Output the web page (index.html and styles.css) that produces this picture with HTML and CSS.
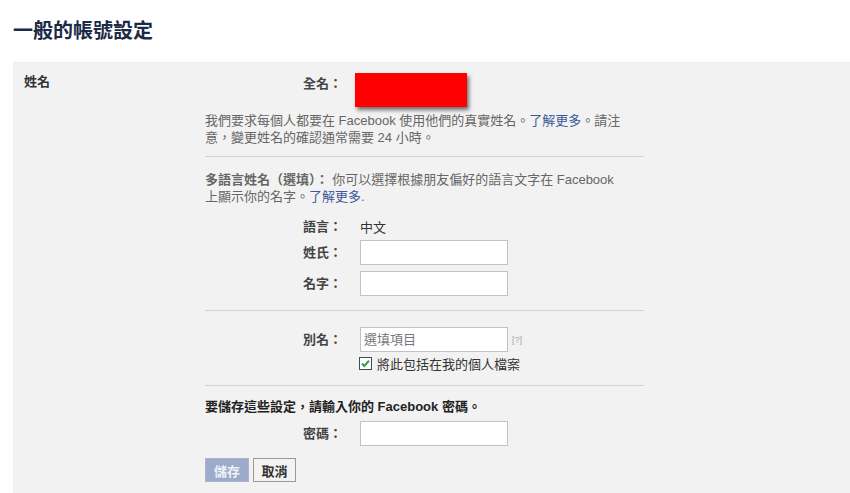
FILE: index.html
```html
<!DOCTYPE html>
<html lang="zh-Hant">
<head>
  <meta charset="UTF-8">
  <title>一般的帳號設定</title>
  <link rel="stylesheet" href="styles.css">
</head>
<body>

<h1 class="page-title">一般的帳號設定</h1>

<div class="panel">
  <div class="panel-label">姓名</div>

  <form class="panel-body">
    <div class="section">
      <div class="row row-top">
        <span class="label">全名：</span>
        <span class="redacted"></span>
      </div>
      <p class="note">我們要求每個人都要在 Facebook 使用他們的真實姓名。<a href="#">了解更多</a>。請注<br>意，變更姓名的確認通常需要 24 小時。</p>
    </div>

    <div class="section">
      <p class="note"><b>多語言姓名（選填）：</b>&nbsp;你可以選擇根據朋友偏好的語言文字在 Facebook<br>上顯示你的名字。<a href="#">了解更多</a>.</p>
      <div class="row row-lang">
        <span class="label">語言：</span>
        <span class="value">中文</span>
      </div>
      <div class="row row-first">
        <label class="label" for="lastName">姓氏：</label>
        <input class="field" type="text" id="lastName">
      </div>
      <div class="row row-next">
        <label class="label" for="firstName">名字：</label>
        <input class="field" type="text" id="firstName">
      </div>
    </div>

    <div class="section section-alias">
      <div class="row">
        <label class="label" for="alias">別名：</label>
        <input class="field" type="text" id="alias" placeholder="選填項目">
        <span class="help">[?]</span>
      </div>
      <div class="check-row">
        <svg class="check" width="13" height="13" viewBox="0 0 13 13">
          <rect x="0.5" y="0.5" width="12" height="12" fill="#fff" stroke="#3b4a63"/>
          <path d="M3 6.5 L5.4 9 L10 3.6" fill="none" stroke="#2fa33a" stroke-width="2"/>
        </svg>
        <span>將此包括在我的個人檔案</span>
      </div>
    </div>

    <div class="section section-last">
      <p class="confirm">要儲存這些設定，請輸入你的 Facebook 密碼。</p>
      <div class="row row-next">
        <label class="label" for="pass">密碼：</label>
        <input class="field" type="password" id="pass">
      </div>
      <div class="buttons">
        <button type="button" class="btn btn-save" disabled>儲存</button>
        <button type="button" class="btn btn-cancel">取消</button>
      </div>
    </div>
  </form>
</div>

</body>
</html>
```

FILE: styles.css
```css
body {
  margin: 0;
  background: #fff;
  font-family: "Liberation Sans", "Noto Sans CJK TC", sans-serif;
  font-size: 13px;
  color: #333;
}

.page-title {
  margin: 0;
  padding: 20px 13px 0;
  height: 62px;
  box-sizing: border-box;
  font-size: 20px;
  line-height: 22px;
  font-weight: bold;
  color: #1c2a47;
}

.panel {
  margin-left: 13px;
  height: 431px;
  box-sizing: border-box;
  background: #f2f2f2;
  border-top: 1px solid #ececec;
  display: grid;
  grid-template-columns: 192px 439px;
}

.panel-label {
  padding: 10px 0 0 11px;
  font-weight: bold;
  color: #333;
  line-height: 17px;
}

.section {
  padding: 10px 0 10px;
  border-bottom: 1px solid #d3d3d3;
}

.section + .section {
  padding-top: 14px;
  padding-bottom: 14px;
}

.section-alias.section {
  padding-top: 16px;
  padding-bottom: 14px;
}

.section-last.section {
  padding-top: 12px;
  border-bottom: none;
}

.row {
  display: flex;
  align-items: center;
}

.row-top {
  align-items: flex-start;
}

.row-lang {
  margin-top: 13px;
  height: 17px;
}

.row-first {
  margin-top: 5px;
}

.row-next {
  margin-top: 6px;
}

.label {
  width: 137px;
  text-align: right;
  font-weight: bold;
  color: #444;
  margin-right: 18px;
  line-height: 17px;
}

.row-top .label {
  margin-top: 2px;
}

.redacted {
  width: 112px;
  height: 34px;
  margin-left: -5px;
  background: #f00;
  box-shadow: 2px 3px 4px rgba(0, 0, 0, 0.55);
}

.note {
  margin: 5px 0 0;
  width: 430px;
  line-height: 17px;
  color: #666;
}

.section + .section .note {
  margin-top: 0;
}

.note b {
  color: #666;
}

.note a {
  color: #3b5998;
  text-decoration: none;
}

.value {
  color: #333;
}

.field {
  width: 148px;
  height: 25px;
  box-sizing: border-box;
  margin: 0;
  padding: 2px 3px;
  border: 1px solid #bdc2cc;
  background: #fff;
  font-family: inherit;
  font-size: 13px;
}

.field::placeholder {
  color: #777;
}

.help {
  margin-left: 4px;
  font-size: 9px;
  color: #aaa;
}

.check-row {
  display: flex;
  align-items: center;
  margin: 4px 0 0 154px;
  height: 15px;
  color: #333;
}

.check {
  margin-right: 5px;
}

.confirm {
  margin: 0;
  line-height: 17px;
  font-weight: bold;
  color: #222;
}

.buttons {
  display: flex;
  gap: 4px;
  margin-top: 12px;
}

.btn {
  height: 24px;
  padding: 0 6px;
  font-family: inherit;
  font-size: 13px;
  font-weight: bold;
  cursor: pointer;
}

.btn-save {
  width: 44px;
  background: #9dabcb;
  border: 1px solid #a9b5d0;
  color: #eef1f7;
}

.btn-cancel {
  width: 43px;
  background: #f2f2f2;
  border: 1px solid #999;
  color: #333;
}
```
